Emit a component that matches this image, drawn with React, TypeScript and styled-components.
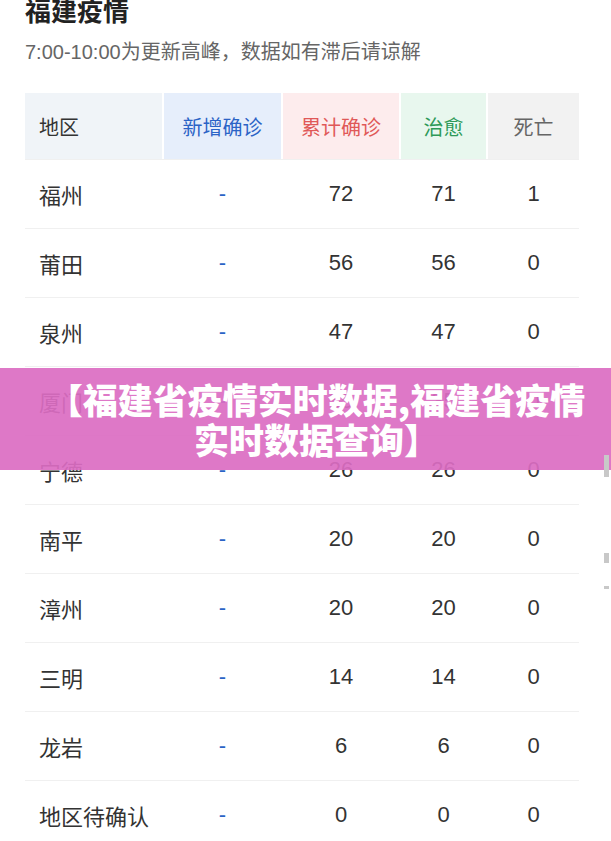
import styled, { createGlobalStyle } from "styled-components";

const GlobalStyle = createGlobalStyle`
  html, body {
    margin: 0;
    padding: 0;
    background: #fff;
    overflow: hidden;
  }
  body {
    font-family: "Liberation Sans", "Noto Sans CJK SC", sans-serif;
    color: #333;
  }
`

const Page = styled.div`
  position: relative;
  width: 611px;
  height: 841px;
  overflow: hidden;
`

const Content = styled.div`
  padding: 0 33px 0 25px;
  margin-top: -8px;
`

const Title = styled.h1`
  margin: 0;
  font-size: 26px;
  line-height: 36px;
  font-weight: 700;
  color: #222;
  font-family: "Noto Sans CJK SC", sans-serif;
`

const Subtitle = styled.p`
  margin: 10px 0 0;
  font-size: 20px;
  line-height: 28px;
  color: #666;
`

const Table = styled.div`
  margin-top: 27px;
  width: 554px;
`

const HeadRow = styled.div`
  display: grid;
  grid-template-columns: 137px 117px 116px 85px 91px;
  column-gap: 2px;
  height: 66px;
`

const HeadCell = styled.div<{ $bg: string; $color: string; $left?: boolean }>`
  background: ${p => p.$bg};
  color: ${p => p.$color};
  display: flex;
  align-items: center;
  justify-content: ${p => (p.$left ? "flex-start" : "center")};
  padding-left: ${p => (p.$left ? "14px" : "0")};
  font-size: 20px;
  font-family: "Noto Sans CJK SC", sans-serif;
`

const Row = styled.div`
  display: grid;
  grid-template-columns: 137px 117px 116px 85px 91px;
  column-gap: 2px;
  height: 69px;
  box-sizing: border-box;
  border-top: 1px solid #f0f0f0;
  &:first-of-type {
    border-top: none;
  }
`

const Cell = styled.div<{ $left?: boolean; $blue?: boolean }>`
  display: flex;
  align-items: center;
  justify-content: ${p => (p.$left ? "flex-start" : "center")};
  padding-left: ${p => (p.$left ? "14px" : "0")};
  font-size: 22px;
  color: ${p => (p.$blue ? "#2b63c6" : "#333")};
`

const Banner = styled.div`
  position: absolute;
  left: 0;
  right: 0;
  top: 368px;
  height: 102px;
  background: rgba(219, 108, 194, 0.92);
  display: flex;
  align-items: center;
  justify-content: center;
  padding: 0 0 0 22px;
  box-sizing: border-box;
`

const BannerText = styled.div`
  color: #fff;
  font-family: "Noto Sans CJK SC", sans-serif;
  font-weight: 900;
  font-size: 35px;
  line-height: 40px;
  text-align: center;
  white-space: nowrap;
`

const ScrollMark = styled.div<{ $top: number; $h: number }>`
  position: absolute;
  right: 2px;
  top: ${p => p.$top}px;
  width: 5px;
  height: ${p => p.$h}px;
  background: #c8c8c8;
`

const rows = [
  ["福州", "72", "71", "1"],
  ["莆田", "56", "56", "0"],
  ["泉州", "47", "47", "0"],
  ["厦门", "35", "35", "0"],
  ["宁德", "26", "26", "0"],
  ["南平", "20", "20", "0"],
  ["漳州", "20", "20", "0"],
  ["三明", "14", "14", "0"],
  ["龙岩", "6", "6", "0"],
  ["地区待确认", "0", "0", "0"],
]

export default function App() {
  return (
    <Page>
      <GlobalStyle />
      <Content>
        <Title>福建疫情</Title>
        <Subtitle>7:00-10:00为更新高峰，数据如有滞后请谅解</Subtitle>
        <Table>
          <HeadRow>
            <HeadCell $bg="#f0f4f8" $color="#333" $left>地区</HeadCell>
            <HeadCell $bg="#e6eefb" $color="#2b63c6">新增确诊</HeadCell>
            <HeadCell $bg="#fdeced" $color="#e05858">累计确诊</HeadCell>
            <HeadCell $bg="#e8f7ee" $color="#2e9a58">治愈</HeadCell>
            <HeadCell $bg="#f2f2f2" $color="#666">死亡</HeadCell>
          </HeadRow>
          {rows.map(r => (
            <Row key={r[0]}>
              <Cell $left>{r[0]}</Cell>
              <Cell $blue>-</Cell>
              <Cell>{r[1]}</Cell>
              <Cell>{r[2]}</Cell>
              <Cell>{r[3]}</Cell>
            </Row>
          ))}
        </Table>
      </Content>
      <Banner>
        <BannerText>
          【福建省疫情实时数据,福建省疫情
          <br />
          实时数据查询】
        </BannerText>
      </Banner>
      <ScrollMark $top={455} $h={22} />
      <ScrollMark $top={553} $h={10} />
      <ScrollMark $top={586} $h={3} />
    </Page>
  )
}
